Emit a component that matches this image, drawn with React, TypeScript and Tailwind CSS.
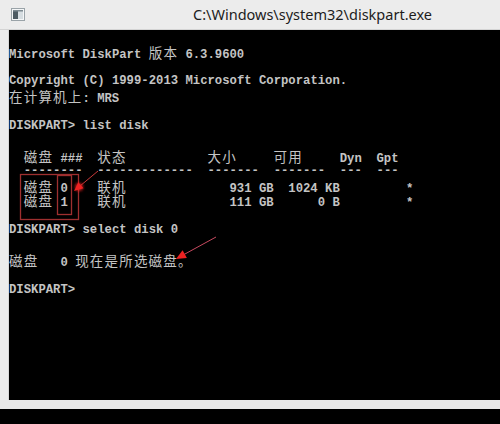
import React from "react";

const lines: string[] = [
  "Microsoft DiskPart 版本 6.3.9600",
  "",
  "Copyright (C) 1999-2013 Microsoft Corporation.",
  "在计算机上: MRS",
  "",
  "DISKPART> list disk",
  "",
  "  磁盘 ###  状态           大小     可用     Dyn  Gpt",
  "  --------  -------------  -------  -------  ---  ---",
  "  磁盘 0    联机              931 GB  1024 KB         *",
  "  磁盘 1    联机              111 GB      0 B         *",
  "",
  "DISKPART> select disk 0",
  "",
  "磁盘   0 现在是所选磁盘。",
  "",
  "DISKPART>",
];

const isWide = (ch: string) => /[\u2E80-\uFFFF]/.test(ch);

const ConsoleLine = ({ text }: { text: string }) => {
  const parts: React.ReactNode[] = [];
  let run = "";
  Array.from(text).forEach((ch, i) => {
    if (isWide(ch)) {
      if (run) {
        parts.push(run);
        run = "";
      }
      parts.push(
        <span
          key={i}
          className="inline-block w-[14.7px] text-left text-[13.5px] leading-[14.9px] font-normal font-['Noto_Sans_CJK_SC',sans-serif]"
        >
          {ch}
        </span>
      );
    } else {
      run += ch;
    }
  });
  if (run) parts.push(run);
  return <div className="h-[14.9px] leading-[14.9px] whitespace-pre">{parts}</div>;
};

const ConsoleIcon = () => (
  <svg width="14" height="13" viewBox="0 0 14 13">
    <rect x="0.5" y="0.5" width="13" height="12" fill="#f4f6f7" stroke="#9aa3a8" />
    <rect x="2" y="2" width="5" height="9" fill="#4d5b63" />
    <rect x="7" y="2" width="5" height="9" fill="#d6dde1" />
    <rect x="2" y="2" width="10" height="1.5" fill="#7d8a91" />
  </svg>
);

export default function App() {
  return (
    <div className="relative w-[500px] h-[424px] bg-black flex flex-col overflow-hidden">
      <div className="h-[30px] bg-[#ececec] border-b border-[#d4d4d4] flex items-center">
        <div className="w-[193px] pl-[11px] flex items-center">
          <ConsoleIcon />
        </div>
        <span className="text-[14.5px] text-[#1c1c1c] font-['Noto_Sans',sans-serif]">
          C:\Windows\system32\diskpart.exe
        </span>
      </div>
      <div className="flex h-[370px]">
        <div className="w-[9px] bg-[#ececec] border-r border-[#d8d8d8]" />
        <div className="flex-1 pt-[14.5px] text-[12.25px] font-bold text-[#c4c4c4] font-['Liberation_Mono',monospace]">
          {lines.map((l, i) => (
            <ConsoleLine key={i} text={l} />
          ))}
        </div>
      </div>
      <div className="h-[9px] bg-[#e8e8e8]" />

      <svg className="absolute inset-0 pointer-events-none" width="500" height="424">
        <defs>
          <filter id="glow" x="-50%" y="-50%" width="200%" height="200%">
            <feGaussianBlur stdDeviation="1.5" />
          </filter>
        </defs>
        <rect x="20.5" y="174.5" width="58" height="45" fill="none" stroke="#9e2f2f" strokeWidth="1.3" />
        <rect x="57.5" y="175.5" width="14" height="39" fill="none" stroke="#9e2f2f" strokeWidth="1.3" />
        <line x1="98" y1="171" x2="80" y2="186" stroke="#c83a3a" strokeWidth="1" />
        <circle cx="79" cy="187" r="4" fill="#ff2020" filter="url(#glow)" opacity="0.8" />
        <polygon points="74,191 83.5,188.3 78.3,182.2" fill="#ee2222" />
        <line x1="216" y1="237" x2="184" y2="254.5" stroke="#c84a60" strokeWidth="1" />
        <polygon points="176,259 186.9,258.1 182.6,250.2" fill="#ee2222" />
      </svg>
    </div>
  );
}
